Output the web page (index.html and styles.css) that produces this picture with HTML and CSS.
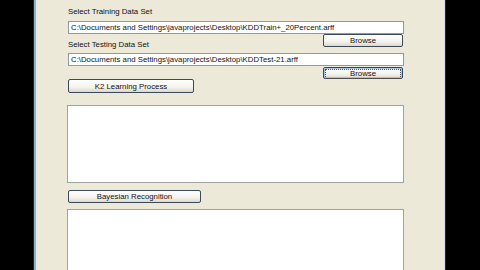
FILE: index.html
```html
<!DOCTYPE html>
<html>
<head>
<meta charset="utf-8">
<link rel="stylesheet" href="styles.css">
</head>
<body>
<div class="window">
  <div class="frame">
    <div class="content">
      <div class="label label-first">Select Training Data Set</div>
      <div class="field">C:\Documents and Settings\javaprojects\Desktop\KDDTrain+_20Percent.arff</div>
      <div class="row-split">
        <div class="label label-second">Select Testing Data Set</div>
        <button class="btn browse">Browse</button>
      </div>
      <div class="field field-second">C:\Documents and Settings\javaprojects\Desktop\KDDTest-21.arff</div>
      <div class="row-right"><button class="btn browse focused"><span class="focus-ring">Browse</span></button></div>
      <div class="row-left"><button class="btn k2">K2 Learning Process</button></div>
      <div class="area area-first"></div>
      <div class="row-left"><button class="btn bayes">Bayesian Recognition</button></div>
      <div class="area area-second"></div>
    </div>
  </div>
</div>
</body>
</html>
```

FILE: styles.css
```css
html, body {
  margin: 0;
  padding: 0;
  background: #000;
  width: 480px;
  height: 270px;
  overflow: hidden;
}
.window {
  margin-left: 33px;
  width: 413px;
  height: 270px;
  box-sizing: border-box;
  border-left: 1px solid #0d2a55;
  border-right: 1px solid #0d2a55;
  background: #ece9d8;
}
.frame {
  height: 100%;
  box-sizing: border-box;
  border-left: 2px solid #8bb0d4;
  border-right: 1px solid #d4dde8;
  background: #ece9d8;
}
.content {
  display: flex;
  flex-direction: column;
  padding-left: 31px;
  width: 337px;
  font-family: "Liberation Sans", Arial, sans-serif;
  font-size: 7.8px;
  color: #111;
}
.label {
  height: 10px;
  line-height: 10px;
  padding-left: 1px;
  white-space: nowrap;
}
.label-first { margin-top: 7px; margin-bottom: 4px; }
.label-second { margin-top: 6px; }
.field {
  height: 13px;
  box-sizing: border-box;
  border: 1px solid #8e9aa6;
  background: #fff;
  line-height: 11px;
  padding-left: 2px;
  white-space: nowrap;
  overflow: hidden;
  margin-left: 1px;
}
.field-second { margin-top: 3px; }
.row-split {
  display: flex;
  justify-content: space-between;
  align-items: flex-start;
  padding-right: 1px;
}
.row-right {
  display: flex;
  justify-content: flex-end;
  padding-right: 1px;
  margin-top: 1px;
}
.row-left {
  display: flex;
  padding-left: 1px;
}
.btn {
  font-family: "Liberation Sans", Arial, sans-serif;
  font-size: 7.8px;
  color: #111;
  margin: 0;
  padding: 0;
  box-sizing: border-box;
  height: 13px;
  line-height: 11px;
  border: 1px solid #3a4a5c;
  border-radius: 2px;
  background: linear-gradient(#ffffff, #f4f3ee 60%, #dcd8c8);
}
.browse { width: 80px; }
.focused {
  height: 12px;
  border-color: #2c4a78;
  box-shadow: inset 0 0 0 1px #a9c3e6;
  padding: 1px;
}
.focus-ring {
  display: block;
  height: 8px;
  line-height: 8px;
  border: 1px dotted #555;
}
.k2 { width: 126px; height: 14px; }
.area {
  background: #fff;
  border: 1px solid #a3a3a3;
  box-sizing: border-box;
}
.area-first { height: 78px; margin-top: 12px; }
.bayes { width: 133px; margin-top: 7px; }
.area-second { height: 70px; margin-top: 6px; }
```
